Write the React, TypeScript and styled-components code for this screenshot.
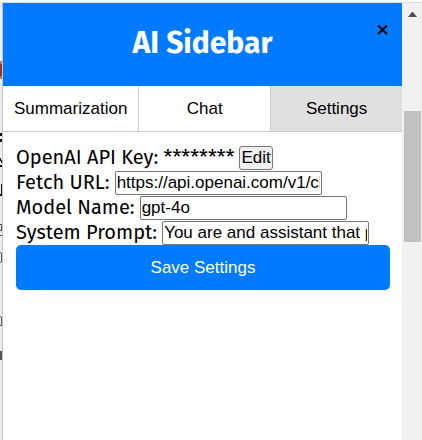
import React, { useState } from "react";
import styled, { createGlobalStyle } from "styled-components";

const GlobalStyle = createGlobalStyle`
  *, *::before, *::after { box-sizing: border-box; }
  body {
    margin: 0;
    background: #fff;
    color: #000;
    font-family: "Fira Sans", "Noto Sans", sans-serif;
    font-size: 20px;
    line-height: 25px;
  }
`;

const Page = styled.div`
  display: flex;
  flex-direction: column;
  min-height: 100vh;
`;

const TopEdge = styled.div`
  height: 3px;
  border-bottom: 1px solid #dcdcdc;
`;

const Frame = styled.div`
  display: grid;
  grid-template-columns: 2px minmax(0, 1fr) 20px;
  flex: 1;
`;

const Backdrop = styled.div`
  overflow: hidden;
  background: #ededed;

  svg { display: block; }
`;

const Sidebar = styled.aside`
  border-left: 1px solid #c4c4c4;
  background: #fff;
`;

const Header = styled.header`
  position: relative;
  padding: 19px 20px 21px;
  background: #007bff;
  color: #fff;
  text-align: center;
`;

const Title = styled.h1`
  margin: 0;
  font-size: 30px;
  font-weight: 700;
  line-height: 43px;
`;

const CloseButton = styled.button`
  position: absolute;
  top: 16px;
  right: 9px;
  display: flex;
  padding: 5px;
  border: 0;
  background: none;
  cursor: pointer;
`;

const Tabs = styled.nav`
  display: flex;
  border-bottom: 1px solid #ccc;
`;

const Tab = styled.button<{ $active: boolean }>`
  flex: 1;
  padding: 12px 11px;
  border: 0;
  background: ${({ $active }) => ($active ? "#e0e0e0" : "#fff")};
  color: #000;
  font: 17px/21px "Liberation Sans", Arial, sans-serif;
  cursor: pointer;

  &:not(:last-child) { border-right: 1px solid #ccc; }
`;

const Settings = styled.form`
  padding: 13px 12px 13px 13px;
`;

const Field = styled.div`
  display: flex;
  align-items: center;
  gap: 5px;
  height: 25px;
  white-space: nowrap;
`;

const TextInput = styled.input`
  width: 207px;
  height: 24px;
  padding: 1px;
  border: 1px solid #767676;
  border-radius: 2px;
  background: #fff;
  color: #000;
  font: 17px/20px "Liberation Sans", Arial, sans-serif;
`;

const EditButton = styled.button`
  height: 24px;
  padding: 0 1px;
  border: 1px solid #767676;
  border-radius: 3px;
  background: #efefef;
  color: #000;
  font: 17px/20px "Liberation Sans", Arial, sans-serif;
`;

const SaveButton = styled.button`
  display: block;
  width: 100%;
  padding: 12px;
  border: 0;
  border-radius: 5px;
  background: #007bff;
  color: #fff;
  font: 17px/21px "Liberation Sans", Arial, sans-serif;
  cursor: pointer;
`;

const ScrollTrack = styled.div`
  display: flex;
  flex-direction: column;
  align-items: center;
  background: #f1f1f1;
`;

const ScrollArrow = styled.svg`
  margin: 9px 0 94px;
`;

const ScrollThumb = styled.div`
  width: 17px;
  height: 131px;
  background: #c1c1c1;
`;

const tabNames = ["Summarization", "Chat", "Settings"];

const fields = [
  { id: "fetch-url", label: "Fetch URL:", value: "https://api.openai.com/v1/chat/completions" },
  { id: "model-name", label: "Model Name:", value: "gpt-4o" },
  { id: "system-prompt", label: "System Prompt:", value: "You are and assistant that provides summaries" },
];

export default function App() {
  const [active, setActive] = useState("Settings");
  return (
    <>
      <GlobalStyle />
      <Page>
        <TopEdge />
        <Frame>
          <Backdrop aria-hidden="true">
            <svg width="2" height="370" viewBox="0 0 2 370">
              <path fill="#b87952" d="M0 58h2v18H0z" />
              <path fill="#9b3220" d="M0 61h2v12H0z" />
              <path fill="#161616" d="M0 130h2v3H0zM0 136h2v3H0zM0 155h1v3H0zM1 157h1v3H1zM0 162h2v2H0zM1 181h1v11H1zM0 191h2v2H0z" />
              <path fill="#555" d="M0 221h2v1H0zM1 222h1v5H1zM0 227h2v1H0zM0 232h2v1H0zM0 249h1v1H0zM1 250h1v9H1zM0 259h1v1H0zM0 313h1v1H0zM1 314h1v9H1zM0 322h1v1H0zM0 348h2v9H0z" />
            </svg>
          </Backdrop>
          <Sidebar>
            <Header>
              <Title>AI Sidebar</Title>
              <CloseButton aria-label="Close">
                <svg width="11" height="11" viewBox="0 0 11 11">
                  <path d="M1 1.5 10 10M10 1.5 1 10" stroke="#000" strokeWidth="2" />
                </svg>
              </CloseButton>
            </Header>
            <Tabs>
              {tabNames.map((name) => (
                <Tab key={name} $active={name === active} onClick={() => setActive(name)}>
                  {name}
                </Tab>
              ))}
            </Tabs>
            <Settings onSubmit={(event) => event.preventDefault()}>
              <Field>
                <span>OpenAI API Key: ********</span>
                <EditButton type="button">Edit</EditButton>
              </Field>
              {fields.map(({ id, label, value }) => (
                <Field key={id}>
                  <label htmlFor={id}>{label}</label>
                  <TextInput id={id} defaultValue={value} />
                </Field>
              ))}
              <SaveButton type="submit">Save Settings</SaveButton>
            </Settings>
          </Sidebar>
          <ScrollTrack aria-hidden="true">
            <ScrollArrow width="9" height="5" viewBox="0 0 9 5">
              <path d="M0 5 4 0h1l4 5z" fill="#505050" />
            </ScrollArrow>
            <ScrollThumb />
          </ScrollTrack>
        </Frame>
      </Page>
    </>
  );
}
